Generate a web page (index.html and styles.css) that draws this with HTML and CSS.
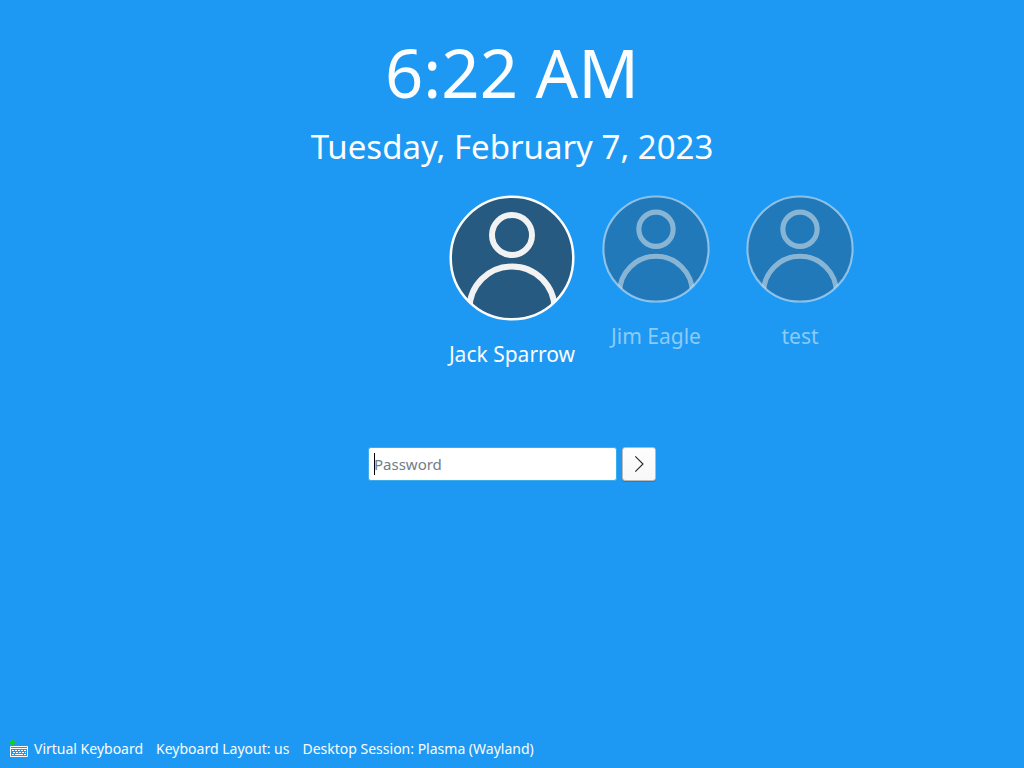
FILE: index.html
```html
<!DOCTYPE html>
<html lang="en">
<head>
<meta charset="utf-8">
<meta name="viewport" content="width=device-width, initial-scale=1">
<title>Login</title>
<link rel="stylesheet" href="styles.css">
</head>
<body class="screen">
<svg class="defs" aria-hidden="true">
  <symbol id="person" viewBox="0 0 126 126">
    <clipPath id="disc"><circle cx="63" cy="63" r="61"/></clipPath>
    <circle cx="63" cy="63" r="61.5" fill="#265a80" stroke="none"/>
    <g clip-path="url(#disc)" fill="none" stroke="#f2f2f2" stroke-width="6">
      <circle cx="63" cy="40" r="20"/>
      <path d="M20.500 114a42.500 42.500 0 0 1 85 0"/>
    </g>
    <circle cx="63" cy="63" r="61.300" fill="none" stroke="#fcfcfc" stroke-width="2.500"/>
  </symbol>
</svg>
<main class="login">
  <header class="clock">
    <time class="time">6:22 AM</time>
    <time class="date" datetime="2023-02-07">Tuesday, February 7, 2023</time>
  </header>
  <section class="users" aria-label="Users">
    <button class="user current" type="button"><svg class="avatar" aria-hidden="true"><use href="#person"/></svg><span>Jack Sparrow</span></button>
    <button class="user" type="button"><svg class="avatar" aria-hidden="true"><use href="#person"/></svg><span>Jim Eagle</span></button>
    <button class="user" type="button"><svg class="avatar" aria-hidden="true"><use href="#person"/></svg><span>test</span></button>
  </section>
  <form class="prompt">
    <input class="password" type="password" placeholder="Password" aria-label="Password" autofocus>
    <button class="submit" type="submit" aria-label="Log in"><svg width="22" height="22" viewBox="0 0 22 22" fill="none" stroke="#232629" stroke-width="1.100"><path d="M7.300 3.300l7.700 7.700-7.700 7.700"/></svg></button>
  </form>
</main>
<footer class="bar">
  <button class="tool" type="button"><svg width="22" height="22" viewBox="0 0 22 22" aria-hidden="true"><path fill="none" stroke="#fcfcfc" d="M2.500 8.500h17v10h-17zM2 10.500h18"/><path fill="none" stroke="#fcfcfc" stroke-dasharray="2 1" d="M4 12.500h14M5 14.500h13M4 16.500h2M16 16.500h2"/><path stroke="#fcfcfc" d="M7 16.500h8"/><path fill="#11d116" d="M3 2h3v1h1v3h-1v1h-3v-1h-1v-3h1z"/></svg>Virtual Keyboard</button>
  <button class="tool" type="button">Keyboard Layout: us</button>
  <button class="tool" type="button">Desktop Session: Plasma (Wayland)</button>
</footer>
</body>
</html>
```
FILE: styles.css
```css
* { box-sizing: border-box; }
.screen {
  margin: 0;
  min-height: 100vh;
  display: flex;
  flex-direction: column;
  background: #1d99f3;
  color: #fcfcfc;
  font-family: "Noto Sans", sans-serif;
}
.defs { position: absolute; width: 0; height: 0; }
button, input { font: inherit; }
.login { flex: 1; display: flex; flex-direction: column; }
.clock { display: flex; flex-direction: column; align-items: center; padding-top: 26px; }
.time { font-size: 67px; line-height: 92px; }
.date { font-size: 33px; line-height: 58px; }
.users {
  display: flex;
  align-items: flex-start;
  padding: 19px 0 0 calc(50% - 72px);
}
.user {
  width: 144px;
  flex: none;
  padding: 0;
  border: 0;
  background: none;
  color: rgba(252, 252, 252, 0.5);
  fill-opacity: 0.5;
  stroke-opacity: 0.5;
  display: flex;
  flex-direction: column;
  align-items: center;
  gap: 20px;
  font-size: 21px;
  line-height: 26px;
}
.current { color: #fcfcfc; fill-opacity: 1; stroke-opacity: 1; }
.avatar { width: 108px; height: 108px; }
.current .avatar { width: 126px; height: 126px; }
.prompt { display: flex; justify-content: center; gap: 5px; padding-top: 80px; }
.password {
  width: 249px;
  height: 34px;
  padding: 0 5px;
  border: 1px solid #3daee9;
  border-radius: 3px;
  outline: 0;
  background: linear-gradient(#000, #000) 5px 5px / 1px 22px no-repeat #fff;
  color: #232629;
  caret-color: #000;
  font-size: 15px;
}
.password::placeholder { color: #707d8a; opacity: 1; }
.submit {
  width: 34px;
  height: 34px;
  padding: 0;
  border: 1px solid #bcb8b8;
  border-radius: 3px;
  background: linear-gradient(#fdfdfd, #f8f8f8);
  box-shadow: 0 1px 0 rgba(0, 0, 0, 0.15);
  display: grid;
  place-items: center;
}
.bar { display: flex; gap: 13px; padding: 0 8px 8px; }
.tool {
  display: flex;
  align-items: center;
  gap: 4px;
  height: 22px;
  padding: 0;
  border: 0;
  background: none;
  color: inherit;
  font-size: 14px;
  line-height: 20px;
}
```
